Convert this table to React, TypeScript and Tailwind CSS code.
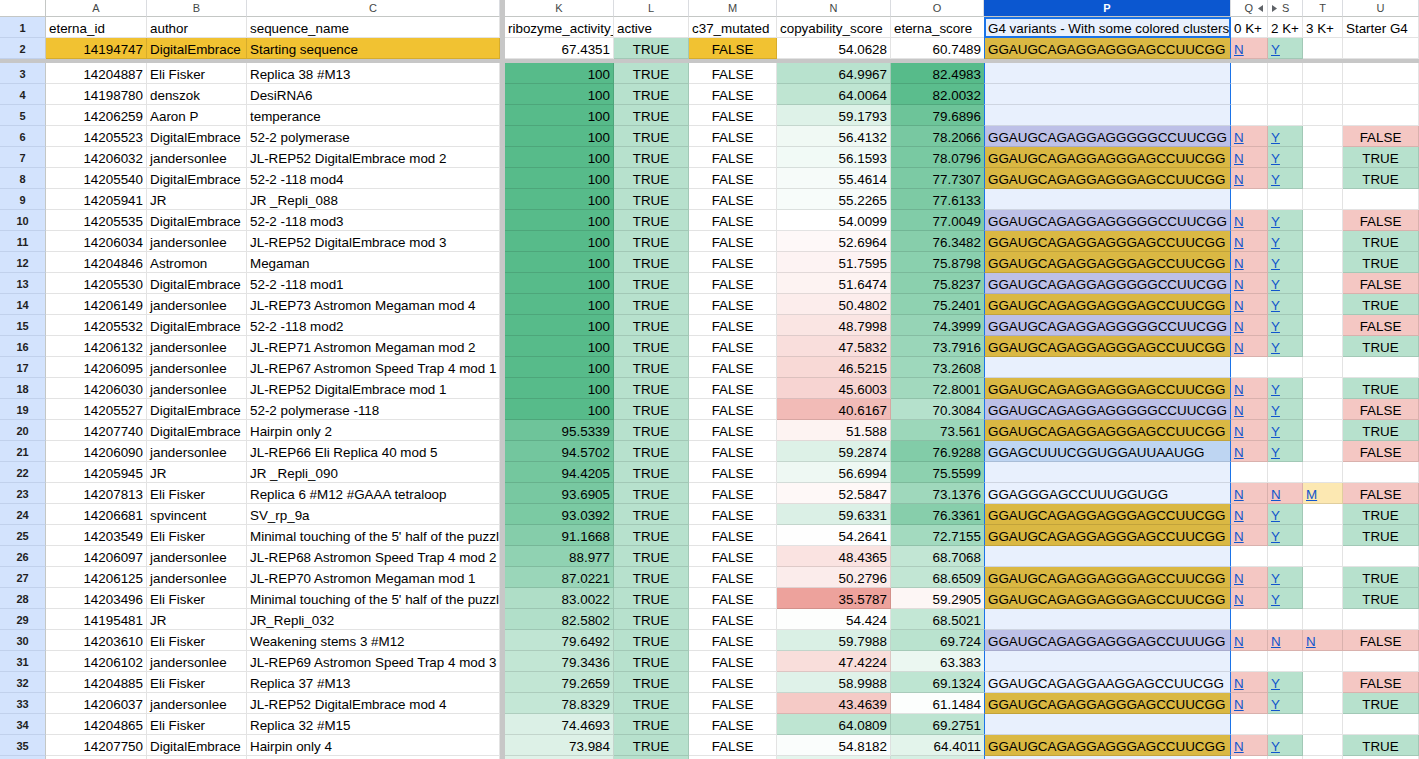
import React from 'react'

// grid template shared by every row: row header, A, B, C, frozen line, K..U
const COLS =
  'grid grid-cols-[46px_101px_100px_253px_5px_109px_75px_88px_114px_93px_247px_37px_35px_40px_76px]'

type Rgb = [number, number, number]

const WHITE: Rgb = [255, 255, 255]
const GREEN: Rgb = [87, 187, 138]
const RED: Rgb = [230, 124, 115]

const mix = (a: Rgb, b: Rgb, t: number) => {
  const c = Math.max(0, Math.min(1, t))
  const v = a.map((x, i) => Math.round(x + (b[i] - x) * c))
  return `rgb(${v[0]}, ${v[1]}, ${v[2]})`
}

// conditional format scales, midpoint = starting sequence
const scale3 = (v: number, min: number, mid: number, max: number) =>
  v >= mid ? mix(WHITE, GREEN, (v - mid) / (max - mid)) : mix(WHITE, RED, (mid - v) / (mid - min))

const kColor = (v: number) => mix(WHITE, GREEN, (v - 67.4351) / (100 - 67.4351))
const nColor = (v: number) => scale3(v, 28, 54.0628, 80)
const oColor = (v: number) => scale3(v, 40, 60.7489, 82.4983)

const GOLD_SEQ = 'GGAUGCAGAGGAGGGAGCCUUCGG'
const LAV_SEQ = 'GGAUGCAGAGGAGGGGGCCUUCGG'

// [id, author, name, ribozyme, copyability, eterna, seqKind, seq, Q, S, T, U]
type Row = [string, string, string, string, string, string, string, string, string, string, string, string]

const ROWS: Row[] = [
  ['14204887', 'Eli Fisker', 'Replica 38 #M13', '100', '64.9967', '82.4983', '', '', '', '', '', ''],
  ['14198780', 'denszok', 'DesiRNA6', '100', '64.0064', '82.0032', '', '', '', '', '', ''],
  ['14206259', 'Aaron P', 'temperance', '100', '59.1793', '79.6896', '', '', '', '', '', ''],
  ['14205523', 'DigitalEmbrace', '52-2 polymerase', '100', '56.4132', '78.2066', 'l', LAV_SEQ, 'N', 'Y', '', 'FALSE'],
  ['14206032', 'jandersonlee', 'JL-REP52 DigitalEmbrace mod 2', '100', '56.1593', '78.0796', 'g', GOLD_SEQ, 'N', 'Y', '', 'TRUE'],
  ['14205540', 'DigitalEmbrace', '52-2 -118 mod4', '100', '55.4614', '77.7307', 'g', GOLD_SEQ, 'N', 'Y', '', 'TRUE'],
  ['14205941', 'JR', 'JR _Repli_088', '100', '55.2265', '77.6133', '', '', '', '', '', ''],
  ['14205535', 'DigitalEmbrace', '52-2 -118 mod3', '100', '54.0099', '77.0049', 'l', LAV_SEQ, 'N', 'Y', '', 'FALSE'],
  ['14206034', 'jandersonlee', 'JL-REP52 DigitalEmbrace mod 3', '100', '52.6964', '76.3482', 'g', GOLD_SEQ, 'N', 'Y', '', 'TRUE'],
  ['14204846', 'Astromon', 'Megaman', '100', '51.7595', '75.8798', 'g', GOLD_SEQ, 'N', 'Y', '', 'TRUE'],
  ['14205530', 'DigitalEmbrace', '52-2 -118 mod1', '100', '51.6474', '75.8237', 'l', LAV_SEQ, 'N', 'Y', '', 'FALSE'],
  ['14206149', 'jandersonlee', 'JL-REP73 Astromon Megaman mod 4', '100', '50.4802', '75.2401', 'g', GOLD_SEQ, 'N', 'Y', '', 'TRUE'],
  ['14205532', 'DigitalEmbrace', '52-2 -118 mod2', '100', '48.7998', '74.3999', 'l', LAV_SEQ, 'N', 'Y', '', 'FALSE'],
  ['14206132', 'jandersonlee', 'JL-REP71 Astromon Megaman mod 2', '100', '47.5832', '73.7916', 'g', GOLD_SEQ, 'N', 'Y', '', 'TRUE'],
  ['14206095', 'jandersonlee', 'JL-REP67 Astromon Speed Trap 4 mod 1', '100', '46.5215', '73.2608', '', '', '', '', '', ''],
  ['14206030', 'jandersonlee', 'JL-REP52 DigitalEmbrace mod 1', '100', '45.6003', '72.8001', 'g', GOLD_SEQ, 'N', 'Y', '', 'TRUE'],
  ['14205527', 'DigitalEmbrace', '52-2 polymerase -118', '100', '40.6167', '70.3084', 'l', LAV_SEQ, 'N', 'Y', '', 'FALSE'],
  ['14207740', 'DigitalEmbrace', 'Hairpin only 2', '95.5339', '51.588', '73.561', 'g', GOLD_SEQ, 'N', 'Y', '', 'TRUE'],
  ['14206090', 'jandersonlee', 'JL-REP66 Eli Replica 40 mod 5', '94.5702', '59.2874', '76.9288', 'b', 'GGAGCUUUCGGUGGAUUAAUGG', 'N', 'Y', '', 'FALSE'],
  ['14205945', 'JR', 'JR _Repli_090', '94.4205', '56.6994', '75.5599', '', '', '', '', '', ''],
  ['14207813', 'Eli Fisker', 'Replica 6 #M12 #GAAA tetraloop', '93.6905', '52.5847', '73.1376', 'w', 'GGAGGGAGCCUUUGGUGG', 'N', 'N', 'M', 'FALSE'],
  ['14206681', 'spvincent', 'SV_rp_9a', '93.0392', '59.6331', '76.3361', 'g', GOLD_SEQ, 'N', 'Y', '', 'TRUE'],
  ['14203549', 'Eli Fisker', "Minimal touching of the 5' half of the puzzle", '91.1668', '54.2641', '72.7155', 'g', GOLD_SEQ, 'N', 'Y', '', 'TRUE'],
  ['14206097', 'jandersonlee', 'JL-REP68 Astromon Speed Trap 4 mod 2', '88.977', '48.4365', '68.7068', '', '', '', '', '', ''],
  ['14206125', 'jandersonlee', 'JL-REP70 Astromon Megaman mod 1', '87.0221', '50.2796', '68.6509', 'g', GOLD_SEQ, 'N', 'Y', '', 'TRUE'],
  ['14203496', 'Eli Fisker', "Minimal touching of the 5' half of the puzzle", '83.0022', '35.5787', '59.2905', 'g', GOLD_SEQ, 'N', 'Y', '', 'TRUE'],
  ['14195481', 'JR', 'JR_Repli_032', '82.5802', '54.424', '68.5021', '', '', '', '', '', ''],
  ['14203610', 'Eli Fisker', 'Weakening stems 3 #M12', '79.6492', '59.7988', '69.724', 'l', 'GGAUGCAGAGGAGGGAGCCUUUGG', 'N', 'N', 'N', 'FALSE'],
  ['14206102', 'jandersonlee', 'JL-REP69 Astromon Speed Trap 4 mod 3', '79.3436', '47.4224', '63.383', '', '', '', '', '', ''],
  ['14204885', 'Eli Fisker', 'Replica 37 #M13', '79.2659', '58.9988', '69.1324', 'w', 'GGAUGCAGAGGAAGGAGCCUUCGG', 'N', 'Y', '', 'FALSE'],
  ['14206037', 'jandersonlee', 'JL-REP52 DigitalEmbrace mod 4', '78.8329', '43.4639', '61.1484', 'g', GOLD_SEQ, 'N', 'Y', '', 'TRUE'],
  ['14204865', 'Eli Fisker', 'Replica 32 #M15', '74.4693', '64.0809', '69.2751', '', '', '', '', '', ''],
  ['14207750', 'DigitalEmbrace', 'Hairpin only 4', '73.984', '54.8182', '64.4011', 'g', GOLD_SEQ, 'N', 'Y', '', 'TRUE'],
]

const CELL =
  'h-[21px] flex items-center px-[3px] pt-[3px] leading-[17px] overflow-hidden whitespace-nowrap border-r border-b border-[#0000001c]'

// P column sits under the column selection, so its fills are tinted blue
const P_BG: Record<string, string> = {
  g: 'bg-[#dab843]',
  l: 'bg-[#bdc0e7]',
  b: 'bg-[#bed5f2]',
  w: 'bg-[#e8f0fd]',
  '': 'bg-[#e8f0fd]',
}

const RowHead = ({ n }: { n?: number }) => (
  <div className="h-[21px] flex items-center justify-center pt-[2px] bg-[#d3e3fd] text-[11px] font-bold text-[#1f1f1f] border-r border-r-[#c4c7c5] border-b border-b-[#c1d1ec]">
    {n}
  </div>
)

const Sep = () => <div className="h-[21px] bg-[#c7c7c7]" />

const Link = ({ v }: { v: string }) => (
  <span className="text-[#1155cc] underline">{v}</span>
)

const flagBg = (v: string) =>
  v === 'N' ? 'bg-[#f4c7c3]' : v === 'Y' ? 'bg-[#b7e1cd]' : v === 'M' ? 'bg-[#fce8b2]' : 'bg-white'

const boolBg = (v: string) =>
  v === 'FALSE' ? 'bg-[#f4c7c3]' : v === 'TRUE' ? 'bg-[#b7e1cd]' : 'bg-white'

function DataRow({ n, r }: { n: number; r: Row }) {
  const [id, author, name, k, copy, eterna, kind, seq, q, s, t, u] = r
  return (
    <div className={COLS}>
      <RowHead n={n} />
      <div className={`${CELL} justify-end`}>{id}</div>
      <div className={CELL}>{author}</div>
      <div className={CELL}>{name}</div>
      <Sep />
      <div className={`${CELL} justify-end`} style={{ backgroundColor: kColor(parseFloat(k)) }}>
        {k}
      </div>
      <div className={`${CELL} justify-center bg-[#b7e1cd]`}>TRUE</div>
      <div className={`${CELL} justify-center`}>FALSE</div>
      <div className={`${CELL} justify-end`} style={{ backgroundColor: nColor(parseFloat(copy)) }}>
        {copy}
      </div>
      <div
        className={`${CELL} justify-end border-r-0`}
        style={{ backgroundColor: oColor(parseFloat(eterna)) }}
      >
        {eterna}
      </div>
      <div className={`${CELL} ${P_BG[kind]} border-l border-l-[#1a73e8] border-r-[#1a73e8]`}>{seq}</div>
      <div className={`${CELL} ${flagBg(q)}`}>{q && <Link v={q} />}</div>
      <div className={`${CELL} ${flagBg(s)}`}>{s && <Link v={s} />}</div>
      <div className={`${CELL} ${flagBg(t)}`}>{t && <Link v={t} />}</div>
      <div className={`${CELL} justify-center ${boolBg(u)}`}>{u}</div>
    </div>
  )
}

const ColHead = ({ label, className = '' }: { label: React.ReactNode; className?: string }) => (
  <div
    className={`h-[17px] flex items-center justify-center pt-[1px] text-[11px] text-[#444746] border-r border-r-[#dadce0] border-b border-b-[#c4c7c5] ${className}`}
  >
    {label}
  </div>
)

const TriLeft = () => (
  <svg width="5" height="7" viewBox="0 0 5 7" className="ml-[5px]">
    <path d="M5 0 L0 3.5 L5 7 Z" fill="#5f6368" />
  </svg>
)

const TriRight = () => (
  <svg width="5" height="7" viewBox="0 0 5 7" className="mr-[5px]">
    <path d="M0 0 L5 3.5 L0 7 Z" fill="#5f6368" />
  </svg>
)

export default function App() {
  const starting = { k: '67.4351', copy: '54.0628', eterna: '60.7489' }

  return (
    <div className="w-[1419px] h-[759px] overflow-hidden bg-white text-[13.4px] text-black font-['Liberation_Sans',Arial,sans-serif]">
      {/* column letters */}
      <div className={COLS}>
        <div className="h-[17px] bg-white border-r border-r-[#c4c7c5] border-b border-b-[#c4c7c5]" />
        <ColHead label="A" />
        <ColHead label="B" />
        <ColHead label="C" />
        <div className="h-[17px] bg-[#c7c7c7]" />
        <ColHead label="K" />
        <ColHead label="L" />
        <ColHead label="M" />
        <ColHead label="N" />
        <ColHead label="O" />
        <ColHead label="P" className="bg-[#0b57d0] !text-white font-bold border-r-[#0b57d0]" />
        <ColHead label={<><span className="ml-auto">Q</span><TriLeft /></>} className="!justify-end pr-[4px]" />
        <ColHead label={<><TriRight /><span>S</span></>} className="!justify-start pl-[4px]" />
        <ColHead label="T" />
        <ColHead label="U" />
      </div>

      {/* row 1: headers */}
      <div className={COLS}>
        <RowHead n={1} />
        <div className={CELL}>eterna_id</div>
        <div className={CELL}>author</div>
        <div className={CELL}>sequence_name</div>
        <Sep />
        <div className={CELL}>ribozyme_activity_</div>
        <div className={CELL}>active</div>
        <div className={CELL}>c37_mutated</div>
        <div className={CELL}>copyability_score</div>
        <div className={`${CELL} border-r-0`}>eterna_score</div>
        <div className="h-[21px] flex items-center px-[2px] pt-[1px] leading-[17px] overflow-hidden whitespace-nowrap bg-[#e8f0fd] border-2 border-[#1a73e8]">
          G4 variants - With some colored clusters
        </div>
        <div className={CELL}>0 K+</div>
        <div className={CELL}>2 K+</div>
        <div className={CELL}>3 K+</div>
        <div className={CELL}>Starter G4</div>
      </div>

      {/* row 2: starting sequence */}
      <div className={COLS}>
        <RowHead n={2} />
        <div className={`${CELL} justify-end bg-[#f1c232]`}>14194747</div>
        <div className={`${CELL} bg-[#f1c232]`}>DigitalEmbrace</div>
        <div className={`${CELL} bg-[#f1c232]`}>Starting sequence</div>
        <Sep />
        <div className={`${CELL} justify-end`} style={{ backgroundColor: kColor(parseFloat(starting.k)) }}>
          {starting.k}
        </div>
        <div className={`${CELL} justify-center bg-[#b7e1cd]`}>TRUE</div>
        <div className={`${CELL} justify-center bg-[#f1c232]`}>FALSE</div>
        <div className={`${CELL} justify-end`} style={{ backgroundColor: nColor(parseFloat(starting.copy)) }}>
          {starting.copy}
        </div>
        <div
          className={`${CELL} justify-end border-r-0`}
          style={{ backgroundColor: oColor(parseFloat(starting.eterna)) }}
        >
          {starting.eterna}
        </div>
        <div className={`${CELL} bg-[#dab843] border-l border-l-[#1a73e8] border-r-[#1a73e8]`}>{GOLD_SEQ}</div>
        <div className={`${CELL} bg-[#f4c7c3]`}>
          <Link v="N" />
        </div>
        <div className={`${CELL} bg-[#b7e1cd]`}>
          <Link v="Y" />
        </div>
        <div className={CELL} />
        <div className={CELL} />
      </div>

      {/* frozen rows divider */}
      <div className="h-[4px] bg-[#c7c7c7]" />

      {ROWS.map((r, i) => (
        <DataRow key={r[0] + i} n={i + 3} r={r} />
      ))}

      {/* partially visible row 36 */}
      <div className={COLS}>
        <RowHead />
        <div className={CELL} />
        <div className={CELL} />
        <div className={CELL} />
        <Sep />
        <div className={CELL} style={{ backgroundColor: kColor(73.5) }} />
        <div className={`${CELL} bg-[#b7e1cd]`} />
        <div className={CELL} />
        <div className={CELL} style={{ backgroundColor: nColor(58) }} />
        <div className={`${CELL} border-r-0`} style={{ backgroundColor: oColor(66) }} />
        <div className={`${CELL} bg-[#e8f0fd] border-l border-l-[#1a73e8] border-r-[#1a73e8]`} />
        <div className={CELL} />
        <div className={CELL} />
        <div className={CELL} />
        <div className={CELL} />
      </div>
    </div>
  )
}
